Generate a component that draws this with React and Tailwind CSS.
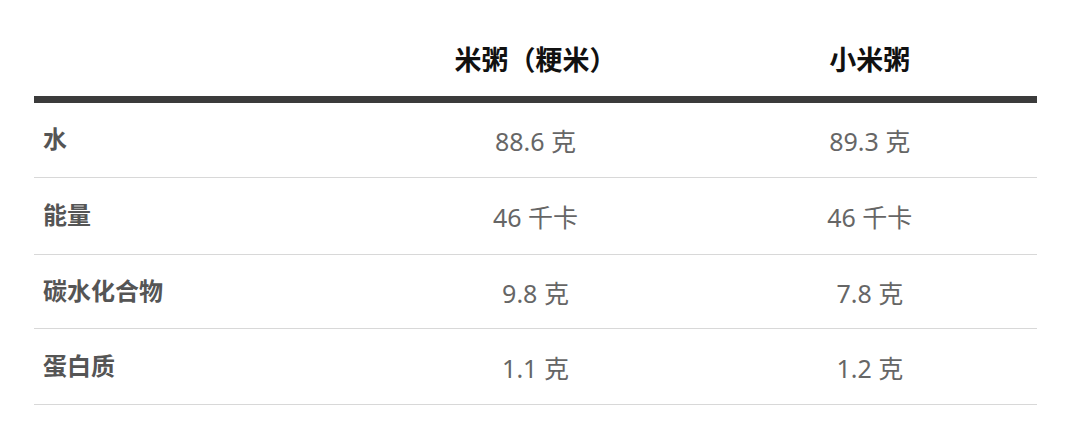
export default function App() {
  const rows = [
    { label: "水", a: "88.6 克", b: "89.3 克", h: "h-[75px]" },
    { label: "能量", a: "46 千卡", b: "46 千卡", h: "h-[77px]" },
    { label: "碳水化合物", a: "9.8 克", b: "7.8 克", h: "h-[74px]" },
    { label: "蛋白质", a: "1.1 克", b: "1.2 克", h: "h-[76px]" },
  ];
  return (
    <div
      className="w-[1080px] h-[439px] bg-white overflow-hidden"
      style={{ fontFamily: '"Noto Sans", "Noto Sans CJK SC", sans-serif' }}
    >
      <div className="ml-[34px] w-[1003px]">
        <div className="grid grid-cols-3 h-[103px] pt-[42px] border-b-[7px] border-[#3b3b3b]">
          <div />
          <div className="text-center text-[27px] leading-[36px] font-bold text-[#111]">米粥（粳米）</div>
          <div className="text-center text-[27px] leading-[36px] font-bold text-[#111]">小米粥</div>
        </div>
        {rows.map((r, i) => (
          <div
            key={i}
            className={`grid grid-cols-3 items-center ${r.h} border-b border-[#d8d8d8]`}
          >
            <div className="pl-[9px] text-[24px] leading-[32px] font-bold text-[#555] -mt-[2px]">{r.label}</div>
            <div className="text-center text-[25px] leading-[32px] text-[#666] mt-[2px]">{r.a}</div>
            <div className="text-center text-[25px] leading-[32px] text-[#666] mt-[2px]">{r.b}</div>
          </div>
        ))}
      </div>
    </div>
  );
}
